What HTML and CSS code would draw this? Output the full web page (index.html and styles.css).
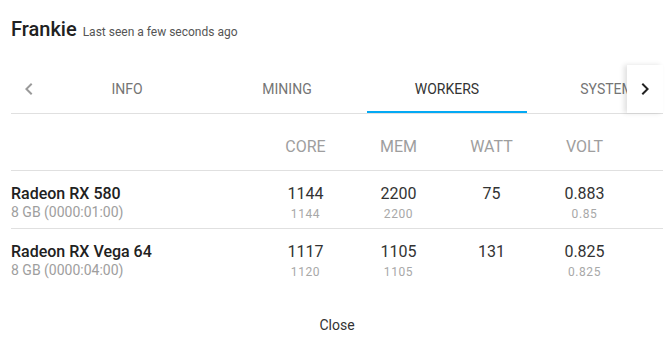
FILE: index.html
```html
<!DOCTYPE html>
<html>
<head>
<meta charset="utf-8">
<link rel="stylesheet" href="styles.css">
</head>
<body>
<div class="dialog">
  <div class="title">
    <span class="name">Frankie</span>
    <span class="seen">Last seen a few seconds ago</span>
  </div>

  <div class="tabbar">
    <div class="arrow arrow-prev">
      <svg width="24" height="24" viewBox="0 0 24 24"><path d="M15.41 7.41L14 6l-6 6 6 6 1.41-1.41L10.83 12z" fill="currentColor"/></svg>
    </div>
    <div class="tabs">
      <div class="tab">INFO</div>
      <div class="tab">MINING</div>
      <div class="tab active">WORKERS</div>
      <div class="tab">SYSTEM</div>
    </div>
    <div class="arrow arrow-next">
      <svg width="24" height="24" viewBox="0 0 24 24"><path d="M10 6L8.59 7.41 13.17 12l-4.58 4.59L10 18l6-6z" fill="currentColor"/></svg>
    </div>
  </div>

  <div class="table">
    <div class="row head">
      <div></div>
      <div class="cell">CORE</div>
      <div class="cell">MEM</div>
      <div class="cell">WATT</div>
      <div class="cell">VOLT</div>
      <div></div>
    </div>
    <div class="row">
      <div class="gpu">
        <div class="gpu-name">Radeon RX 580</div>
        <div class="gpu-sub">8 GB (0000:01:00)</div>
      </div>
      <div class="cell"><div class="main">1144</div><div class="sub">1144</div></div>
      <div class="cell"><div class="main">2200</div><div class="sub">2200</div></div>
      <div class="cell"><div class="main">75</div></div>
      <div class="cell"><div class="main">0.883</div><div class="sub">0.85</div></div>
      <div></div>
    </div>
    <div class="row last">
      <div class="gpu">
        <div class="gpu-name">Radeon RX Vega 64</div>
        <div class="gpu-sub">8 GB (0000:04:00)</div>
      </div>
      <div class="cell"><div class="main">1117</div><div class="sub">1120</div></div>
      <div class="cell"><div class="main">1105</div><div class="sub">1105</div></div>
      <div class="cell"><div class="main">131</div></div>
      <div class="cell"><div class="main">0.825</div><div class="sub">0.825</div></div>
      <div></div>
    </div>
  </div>

  <div class="actions">
    <button class="close">Close</button>
  </div>
</div>
</body>
</html>
```

FILE: styles.css
```css
html, body {
  margin: 0;
  padding: 0;
  background: #fff;
}

body {
  font-family: Roboto, "Liberation Sans", sans-serif;
  color: #212121;
}

.dialog {
  width: 652px;
  padding-left: 11px;
}

.title {
  padding-top: 13px;
  height: 32px;
  display: flex;
  align-items: baseline;
  gap: 6px;
}

.name {
  font-size: 20px;
  line-height: 32px;
  font-weight: 500;
  color: #212121;
}

.seen {
  font-size: 12px;
  line-height: 12px;
  color: #555;
}

.tabbar {
  margin-top: 20px;
  display: flex;
  height: 48px;
  border-bottom: 1px solid #e0e0e0;
}

.arrow {
  width: 36px;
  flex: 0 0 36px;
  display: flex;
  align-items: center;
  justify-content: center;
  background: #fff;
}

.arrow-prev {
  color: #9a9a9a;
}

.arrow-next {
  color: #222;
  box-shadow: -3px 0 5px rgba(0, 0, 0, 0.12);
  z-index: 1;
}

.tabs {
  flex: 1;
  display: flex;
  overflow: hidden;
}

.tab {
  flex: 0 0 160px;
  display: flex;
  align-items: center;
  justify-content: center;
  font-size: 14px;
  color: #757575;
  box-sizing: border-box;
  border-bottom: 2px solid transparent;
  padding-top: 2px;
}

.tab.active {
  color: #333;
  border-bottom-color: #03a9f4;
}

.row {
  display: grid;
  grid-template-columns: 248px repeat(4, 93px) 1fr;
  border-bottom: 1px solid #e0e0e0;
  box-sizing: border-box;
}

.row.head {
  padding: 22px 0 12px;
  font-size: 16px;
  line-height: 22px;
  color: #9e9e9e;
}

.row:not(.head) {
  height: 58px;
  padding-top: 12px;
}

.row.last {
  border-bottom: none;
  height: 57px;
}

.cell {
  text-align: center;
}

.gpu-name {
  font-size: 16px;
  line-height: 22px;
  font-weight: 500;
  color: #212121;
}

.gpu-sub {
  font-size: 14px;
  line-height: 15px;
  color: #9e9e9e;
}

.main {
  font-size: 16px;
  line-height: 22px;
  color: #333;
}

.sub {
  font-size: 12px;
  line-height: 18px;
  letter-spacing: 0.6px;
  color: #a8a8a8;
}

.actions {
  display: flex;
  justify-content: center;
  padding-top: 20px;
}

.close {
  font-family: Roboto, "Liberation Sans", sans-serif;
  font-size: 14px;
  line-height: 20px;
  color: #333;
  background: none;
  border: none;
  padding: 9px 16px 8px;
}
```
